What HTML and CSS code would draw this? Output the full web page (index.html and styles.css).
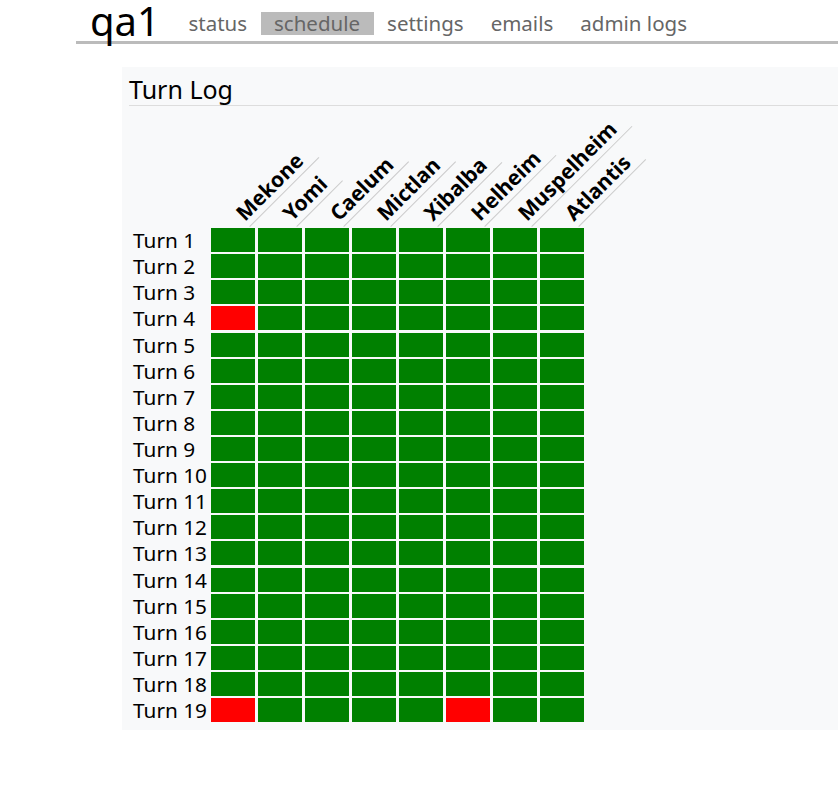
FILE: index.html
```html
<!DOCTYPE html>
<html lang="en">
<head>
<meta charset="utf-8">
<title>qa1 - schedule</title>
<link rel="stylesheet" href="styles.css">
</head>
<body>
<header class="topbar">
  <h1 class="brand">qa1</h1>
  <nav class="nav">
    <a class="nav-link" href="#">status</a>
    <a class="nav-link active" href="#">schedule</a>
    <a class="nav-link" href="#">settings</a>
    <a class="nav-link" href="#">emails</a>
    <a class="nav-link" href="#">admin logs</a>
  </nav>
</header>
<section class="panel">
  <h2 class="panel-title">Turn Log</h2>
  <div class="log" id="log">
    <div class="corner"></div>
  </div>
</section>
<script src="app.js"></script>
</body>
</html>
```
FILE: styles.css
```css
html, body {
  margin: 0;
  padding: 0;
  background: #ffffff;
  overflow: hidden;
}
body {
  font-family: "Noto Sans", "Open Sans", sans-serif;
  color: #000;
}
.topbar {
  margin-left: 76px;
  height: 41px;
  border-bottom: 3px solid #bbbbbb;
  display: flex;
  align-items: flex-start;
}
.brand {
  margin: 0;
  padding-left: 14px;
  font-size: 40px;
  font-weight: 400;
  line-height: 41px;
}
.nav {
  display: flex;
  margin-left: 15px;
  margin-top: 12px;
}
.nav-link {
  color: #666666;
  text-decoration: none;
  font-size: 20.5px;
  line-height: 23px;
  padding: 0 13.5px;
}
.nav-link.active {
  background: #bbbbbb;
}
.panel {
  margin-top: 23px;
  margin-left: 122px;
  background: #f8f9fa;
  padding: 6px 0 8px 7px;
}
.panel-title {
  margin: 0;
  font-size: 25px;
  font-weight: 400;
  line-height: 32px;
  border-bottom: 1px solid #dddddd;
}
.log {
  display: grid;
  grid-template-columns: 79px repeat(8, 44px);
  grid-template-rows: 120px;
  grid-auto-rows: 24px;
  column-gap: 3px;
  row-gap: 2.11px;
}
.head {
  position: relative;
}
.head-label {
  position: absolute;
  left: 39px;
  bottom: -1px;
  transform-origin: 0 100%;
  transform: rotate(-45deg);
  white-space: nowrap;
  font-size: 21px;
  font-weight: 700;
  line-height: 28px;
  padding-right: 13px;
  border-bottom: 1px solid #cccccc;
}
.row-label {
  font-size: 20.8px;
  line-height: 24px;
  padding-left: 4px;
  white-space: nowrap;
}
.cell {
  background: #008000;
}
.cell.fail {
  background: #ff0000;
}
```
FILE: app.js
```js
(function () {
  var worlds = ["Mekone", "Yomi", "Caelum", "Mictlan", "Xibalba", "Helheim", "Muspelheim", "Atlantis"];
  var fails = { "4": [0], "19": [0, 5] };
  var log = document.getElementById("log");
  worlds.forEach(function (w) {
    var h = document.createElement("div");
    h.className = "head";
    var s = document.createElement("div");
    s.className = "head-label";
    s.textContent = w;
    h.appendChild(s);
    log.appendChild(h);
  });
  for (var t = 1; t <= 19; t++) {
    var l = document.createElement("div");
    l.className = "row-label";
    l.textContent = "Turn " + t;
    log.appendChild(l);
    for (var c = 0; c < worlds.length; c++) {
      var d = document.createElement("div");
      d.className = "cell";
      if (fails[t] && fails[t].indexOf(c) !== -1) d.className += " fail";
      log.appendChild(d);
    }
  }
})();
```
